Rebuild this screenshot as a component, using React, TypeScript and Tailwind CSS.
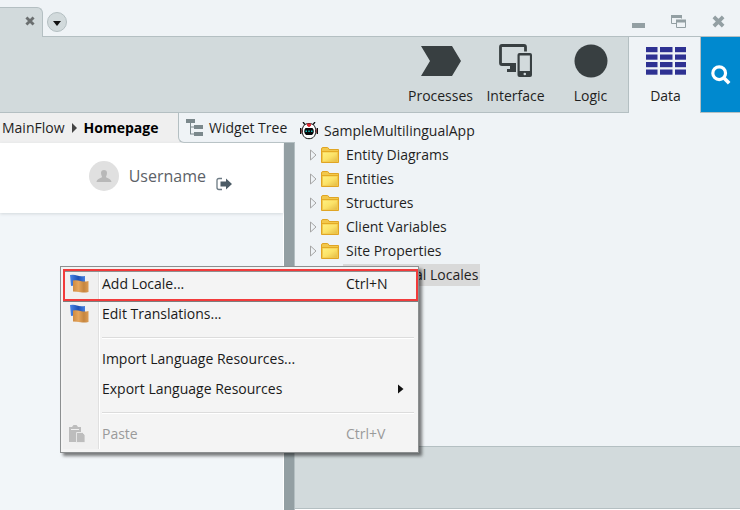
import React from "react";

const folders = ["Entity Diagrams", "Entities", "Structures", "Client Variables", "Site Properties"];

function Cross({ className }: { className: string }) {
  return (
    <svg viewBox="0 0 14 14" className={className} fill="none" stroke="currentColor" strokeWidth="4">
      <path d="M2 2l10 10M12 2L2 12" />
    </svg>
  );
}

function ProcessIcon() {
  return (
    <svg width="40" height="32" viewBox="0 0 40 32" fill="#383f41">
      <path d="M0 1h31l9 15-9 15H0l9-15z" />
    </svg>
  );
}

function InterfaceIcon() {
  return (
    <svg width="34" height="34" viewBox="0 0 34 34" fill="none">
      <rect x="1.500" y="1.500" width="25" height="19" rx="1.500" stroke="#383f41" strokeWidth="2.800" />
      <path d="M11 21h6v4h3v3H8v-3h3z" fill="#383f41" />
      <rect x="17" y="7.500" width="17" height="26.500" rx="2" fill="#d2dadc" />
      <rect x="18.500" y="9" width="14.500" height="24" rx="2" fill="#383f41" />
      <rect x="20.700" y="11.500" width="10.200" height="15.500" fill="#d2dadc" />
      <circle cx="25.800" cy="30" r="1.300" fill="#d2dadc" />
    </svg>
  );
}

function LogicIcon() {
  return (
    <svg width="34" height="34" viewBox="0 0 34 34">
      <circle cx="17" cy="17" r="16.500" fill="#383f41" />
    </svg>
  );
}

function DataIcon() {
  return (
    <svg width="40" height="28" viewBox="0 0 40 28" fill="#2e3192">
      {[0, 7.500, 15, 22.500].map((y) => (
        <React.Fragment key={y}>
          <rect x="0" y={y} width="11.500" height="5.200" />
          <rect x="14" y={y} width="12.500" height="5.200" />
          <rect x="29" y={y} width="11" height="5.200" />
        </React.Fragment>
      ))}
    </svg>
  );
}

function WidgetTreeIcon() {
  return (
    <svg width="17" height="17" viewBox="0 0 17 17" fill="#7b888c">
      <path d="M0 0h9v4H0zM8 6h9v4H8zM8 13h9v4H8zM4 4h1v11H4zM4 7.500h4v1H4zM4 14.500h4v1H4z" />
    </svg>
  );
}

function FolderIcon() {
  return (
    <svg width="18" height="16" viewBox="0 0 18 16">
      <defs>
        <linearGradient id="folderFront" x1="0" y1="0" x2="1" y2="1">
          <stop offset="0" stopColor="#fff07f" />
          <stop offset=".5" stopColor="#fbe268" />
          <stop offset="1" stopColor="#e5bc45" />
        </linearGradient>
      </defs>
      <path d="M.5 15V2Q.5.500 2 .500h4.500Q7.500.500 8 2.500h9.500V15.500H.5z" fill="#f2c84c" stroke="#e0a524" />
      <path d="M1 4.500h16" stroke="#e4ab24" />
      <path d="M2 5.500h14v9H2z" fill="url(#folderFront)" />
    </svg>
  );
}

function RobotIcon() {
  return (
    <svg width="18" height="18" viewBox="0 0 18 18">
      <path d="M3 0l3 4M15 0l-3 4" stroke="#111" strokeWidth="1.300" />
      <path d="M.7 6v6M17.300 6v6" stroke="#111" strokeWidth="1.400" />
      <path d="M1.800 7v4M16.200 7v4" stroke="#b0303a" />
      <path d="M9 1.500c5 0 6.700 3.500 6.700 7.500S14 16.700 9 16.700 2.300 13 2.300 9 4 1.500 9 1.500z" fill="#fff" stroke="#111" />
      <path d="M7 1.500h4v2L9.500 5h-1L7 3.500z" fill="#df2632" />
      <path d="M5.500 6h7q1.500 1.500 1.300 4-.6 2.500-2 3H6.200q-1.400-.5-2-3Q4 7.500 5.500 6z" fill="#050709" />
      <path d="M5.500 8.500h1.500v1.500H5.500zM8.300 8.500h1.400v1.500H8.300zM11 8.500h1.500v1.500H11z" fill="#16c4c0" />
    </svg>
  );
}

function LocaleIcon() {
  return (
    <svg width="20" height="20" viewBox="0 0 20 20">
      <defs>
        <linearGradient id="flagBlue" x1="0" x2="1">
          <stop offset="0" stopColor="#4a86e8" />
          <stop offset=".55" stopColor="#1d50b4" />
          <stop offset="1" stopColor="#4580e0" />
        </linearGradient>
        <linearGradient id="flagOrange" x1="0" x2="1">
          <stop offset="0" stopColor="#cf8a40" />
          <stop offset=".35" stopColor="#e5a55c" />
          <stop offset=".7" stopColor="#c5853f" />
          <stop offset="1" stopColor="#dd9d55" />
        </linearGradient>
      </defs>
      <path d="M1 1q4-.8 7 .5t8 .5v10q-4 1.500-8 .5T2 12z" fill="url(#flagBlue)" />
      <path d="M4 6.500q4-.5 7.500.5t8 0V18q-4 1-8 .3T4 17.500z" fill="url(#flagOrange)" />
    </svg>
  );
}

function PasteIcon() {
  return (
    <svg width="17" height="18" viewBox="0 0 17 18" fill="#bdbdbd">
      <path d="M0 2h3l1.500-2h3L9 2h3v5H8v10H0z" />
      <path d="M2 4.500h8" stroke="#f0f0f0" />
      <path d="M7.500 7.500h6l2.500 2.500v7.500H7.500z" stroke="#f0f0f0" strokeWidth=".8" />
    </svg>
  );
}

function NavButton({ label, children, active = false }: { label: string; children: React.ReactNode; active?: boolean }) {
  return (
    <button
      type="button"
      className={
        "flex flex-col items-center pt-1.5 " +
        (active ? "-mb-px w-[73px] border-x border-[#b4bfc2] bg-[#eff3f6] pl-0.5" : "w-[75px]")
      }
    >
      <span className="flex h-9 items-center">{children}</span>
      <span className="mt-[7px] leading-5">{label}</span>
    </button>
  );
}

function MenuItem({ label, shortcut, icon, submenu = false, disabled = false, marked = false }: {
  label: string;
  shortcut?: string;
  icon?: React.ReactNode;
  submenu?: boolean;
  disabled?: boolean;
  marked?: boolean;
}) {
  return (
    <button
      type="button"
      role="menuitem"
      disabled={disabled}
      className={"relative flex h-[30px] w-full items-center text-left " + (disabled ? "text-[#9a9a9a]" : "text-[#1a1a1a]")}
    >
      <span className="flex w-[39px] shrink-0 items-center pl-1.5">{icon}</span>
      <span className="flex-1">{label}</span>
      {shortcut && <span className="w-[72px]">{shortcut}</span>}
      {submenu && (
        <svg width="6" height="10" viewBox="0 0 6 10" className="mr-3.5" fill="#111">
          <path d="M0 .5l5.500 4.500L0 9.500z" />
        </svg>
      )}
      {marked && <span className="absolute inset-x-0 top-0 h-8 border-2 border-[#f23b3b] shadow-[0_1px_0_#7e7e7e,inset_0_1px_0_#8f8f8f]" />}
    </button>
  );
}

function Separator() {
  return (
    <div role="separator" className="h-[15px] pt-2 pr-1 pl-[39px]">
      <div className="h-0.5 border-t border-b border-t-[#dcdcdc] border-b-white" />
    </div>
  );
}

export default function App() {
  return (
    <div className="relative flex min-h-screen flex-col overflow-hidden bg-[#eff3f6] font-['Open_Sans','Noto_Sans',sans-serif] text-sm text-[#1f1f1f]">
      <header className="flex h-[37px] shrink-0 items-end border-b border-[#b4bfc2]">
        <div className="-mb-px flex h-[30px] w-[43px] items-center justify-end rounded-tr-md border-t border-r border-[#b4bfc2] bg-[#d2dadc] pr-[7px] pb-1">
          <button type="button" aria-label="Close tab" className="text-[#6b6f70]">
            <Cross className="size-2.5" />
          </button>
        </div>
        <button type="button" aria-label="Open tabs" className="mb-1 ml-1 flex size-5 items-center justify-center rounded-full border border-[#b4bfc2] bg-[#d2dadc] pt-0.5">
          <svg width="8" height="5" viewBox="0 0 8 5" fill="#111"><path d="M0 0h8L4 5z" /></svg>
        </button>
        <div className="mb-2 ml-auto flex items-end gap-[26px] pr-[15px] text-[#939fa3]">
          <button type="button" aria-label="Minimize" className="h-[5px] w-[13px] bg-[#939fa3]" />
          <button type="button" aria-label="Restore">
            <svg width="15" height="13" viewBox="0 0 15 13" fill="none" stroke="currentColor">
              <path d="M.5 8.500v-8h10v3M.5 8.500H5" />
              <path d="M0 1.500h11" strokeWidth="3" />
              <path d="M5.500 5.500h9v7h-9z" />
              <path d="M5 6h10" strokeWidth="3" />
            </svg>
          </button>
          <button type="button" aria-label="Close">
            <Cross className="size-[13px]" />
          </button>
        </div>
      </header>

      <nav className="flex h-[76px] shrink-0 justify-end border-b border-[#b4bfc2] bg-[#d2dadc]">
        <NavButton label="Processes"><ProcessIcon /></NavButton>
        <NavButton label="Interface"><InterfaceIcon /></NavButton>
        <NavButton label="Logic"><LogicIcon /></NavButton>
        <NavButton label="Data" active><DataIcon /></NavButton>
        <button type="button" aria-label="Search" className="flex w-[39px] items-center justify-center bg-[#0089cf]">
          <svg width="20" height="20" viewBox="0 0 22 22" fill="none" stroke="#fff">
            <circle cx="9" cy="9" r="7" strokeWidth="3.500" />
            <path d="M14 14l6 6" strokeWidth="4" />
          </svg>
        </button>
      </nav>

      <main className="flex flex-1">
        <section className="flex w-[calc(40%-1px)] shrink-0 flex-col border-r border-[#b4bfc2] bg-[#f2f6f9]">
          <div className="flex h-[30px] items-stretch bg-[#efefef]">
            <div className="flex flex-1 items-center pl-0.5">
              <span>MainFlow</span>
              <svg width="5" height="10" viewBox="0 0 5 10" className="mx-[7px]" fill="#444"><path d="M0 0l5 5-5 5z" /></svg>
              <span className="font-bold text-black">Homepage</span>
            </div>
            <button type="button" className="-mr-px flex w-[117px] items-center gap-1.5 rounded-bl-md border-b border-l border-[#b4bfc2] bg-[#eff3f6] pl-[7px] whitespace-nowrap">
              <WidgetTreeIcon />
              <span>Widget Tree</span>
            </button>
          </div>
          <div className="flex flex-1">
            <div className="flex-1 border-r border-white">
              <div className="flex h-[70px] items-center justify-end bg-white pr-[51px] pb-1 text-base text-[#5c6268] shadow-[0_1px_3px_#d3d8dc]">
                <svg width="30" height="30" viewBox="0 0 30 30">
                  <circle cx="15" cy="15" r="15" fill="#e0e0e0" />
                  <path d="M15 9a3 3 0 013 3c0 2-1 3-1 4s5 1 5.500 5h-15c.5-4 5.500-4 5.500-5s-1-2-1-4A3 3 0 0115 9z" fill="#b8b8b8" />
                </svg>
                <span className="ml-2.5">Username</span>
                <svg width="16" height="14" viewBox="0 0 16 14" className="mt-4 ml-2.5" fill="none">
                  <path d="M6 1.500H3Q1 1.500 1 3.500v7q0 2 2 2h3" stroke="#6c7a83" strokeWidth="1.300" />
                  <path d="M4.500 4.500H10V1.500L16 7l-6 5.500v-3H4.500z" fill="#4c5c66" />
                </svg>
              </div>
            </div>
            <div className="w-2.5 bg-[#939fa3]" />
          </div>
        </section>

        <aside className="flex flex-1 flex-col border-b border-white">
          <ul className="flex-1 pt-1.5">
            <li className="flex h-6 items-center gap-1.5 pl-[5px]"><RobotIcon /><span>SampleMultilingualApp</span></li>
            {folders.map((name) => (
              <li key={name} className="flex h-6 items-center pl-[15px]">
                <svg width="7" height="12" viewBox="0 0 7 12" fill="none" stroke="#a5a5a5"><path d="M.5 1l5.500 5-5.500 5z" /></svg>
                <span className="mr-[7px] ml-1"><FolderIcon /></span>
                <span>{name}</span>
              </li>
            ))}
            <li className="flex h-6 items-center pl-12">
              <span className="bg-[#d9d9d9] pr-0.5 pl-[7px] leading-[22px]">Multilingual Locales</span>
            </li>
          </ul>
          <div className="h-[63px] border-t border-b border-[#b4bfc2] bg-[#d2dadc]" />
        </aside>
      </main>

      <div role="menu" className="absolute top-[266px] left-[60px] w-[359px] border border-[#8c8f90] bg-[#f4f4f4] pb-px shadow-[3px_3px_3px_#00000080]">
        <div className="m-0.5 mr-0 bg-[linear-gradient(to_right,#f0f0f0_35px,#e0e0e0_35px,#e0e0e0_36px,#fff_36px,#fff_37px,transparent_37px)]">
          <MenuItem label="Add Locale..." shortcut="Ctrl+N" icon={<LocaleIcon />} marked />
          <MenuItem label="Edit Translations..." icon={<LocaleIcon />} />
          <Separator />
          <MenuItem label="Import Language Resources..." />
          <MenuItem label="Export Language Resources" submenu />
          <Separator />
          <MenuItem label="Paste" shortcut="Ctrl+V" icon={<PasteIcon />} disabled />
        </div>
      </div>
    </div>
  );
}
